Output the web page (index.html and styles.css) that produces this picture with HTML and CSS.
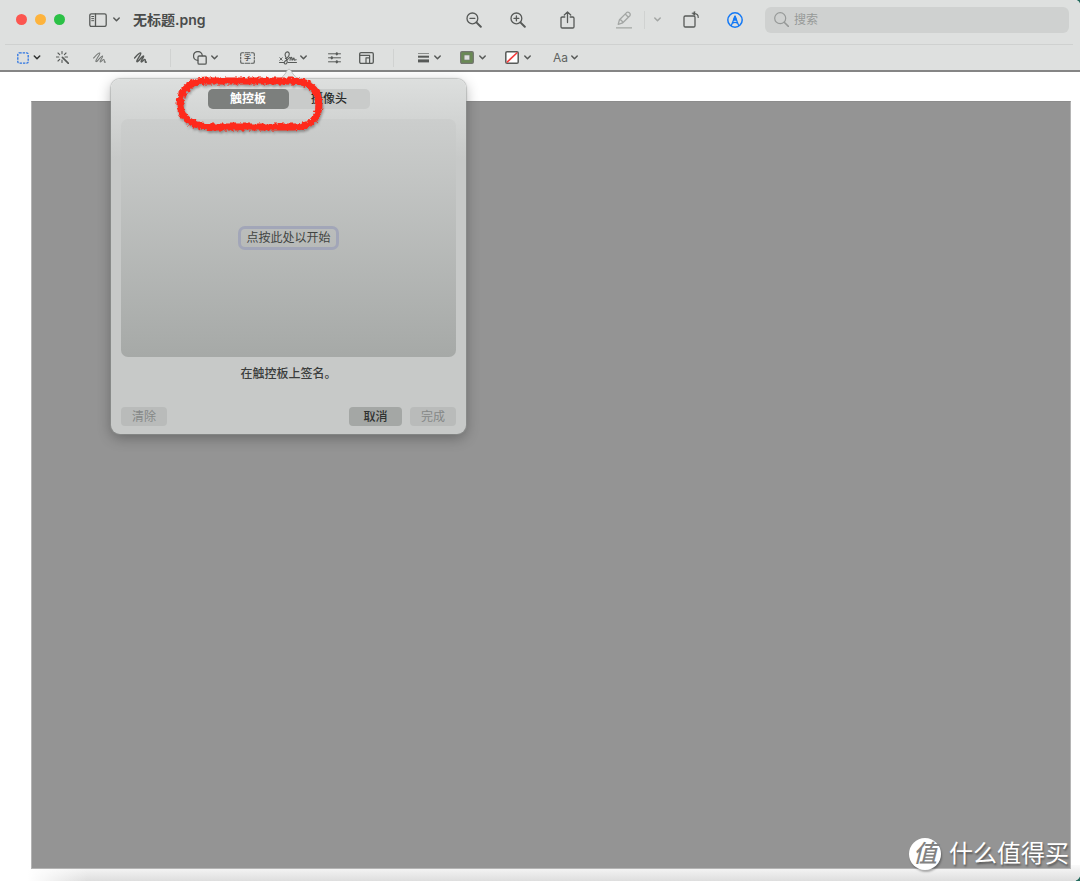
FILE: index.html
```html
<!DOCTYPE html>
<html lang="zh-CN">
<head>
<meta charset="utf-8">
<title>无标题.png</title>
<link rel="stylesheet" href="styles.css">
</head>
<body>
<div class="window">
  <header class="toolbar">
    <div class="titlebar">
      <div class="lights">
        <button class="light close" aria-label="关闭"></button>
        <button class="light minimize" aria-label="最小化"></button>
        <button class="light expand" aria-label="缩放"></button>
      </div>
      <button class="tool sidebar-tool" aria-label="边栏">
        <svg width="18" height="14" viewBox="0 0 18 14"><rect x=".8" y=".8" width="16.4" height="12.6" rx="1.6"/><path d="M6.5 1v12"/><path d="M2.7 3.5h2M2.7 5.6h2M2.7 7.7h2" stroke-width="1"/></svg>
        <svg class="chev" width="7" height="5" viewBox="0 0 7 5"><path d="M.8 1l2.7 2.7L6.2 1"/></svg>
      </button>
      <h1 class="title">无标题.png</h1>
      <div class="actions">
        <button class="tool" aria-label="缩小"><svg width="16" height="16" viewBox="0 0 16 16"><circle cx="6.4" cy="6.4" r="5.4"/><path d="M4 6.4h4.8"/><path d="M10.4 10.4l4.4 4.4" stroke-width="2"/></svg></button>
        <button class="tool zoom-in" aria-label="放大"><svg width="16" height="16" viewBox="0 0 16 16"><circle cx="6.4" cy="6.4" r="5.4"/><path d="M4 6.4h4.8M6.4 4v4.8"/><path d="M10.4 10.4l4.4 4.4" stroke-width="2"/></svg></button>
        <button class="tool share" aria-label="共享"><svg width="15" height="18" viewBox="0 0 15 18"><path d="M4.8 6H2.3Q1 6 1 7.300V15.700Q1 17 2.300 17h10.400Q14 17 14 15.700V7.300Q14 6 12.700 6h-2.500M7.500 11.500V1M4.300 4L7.500.9l3.200 3.100"/></svg></button>
        <button class="tool faded pencil" aria-label="高亮标记"><svg width="16" height="18" viewBox="0 0 16 18"><path d="M2.200 13.400L3.500 8.700 10.600 1.600Q11.800.6 13.300 1.800T13.900 4.700L6.800 11.800zM3.500 8.700q2.500.3 3.300 3.100M9.200 3l3.200 3.200M.5 16.800h15" stroke-width="1.300"/></svg></button>
        <span class="divider short"></span>
        <button class="tool faded more" aria-label="高亮颜色"><svg class="chev" width="7" height="5" viewBox="0 0 7 5"><path d="M.8 1l2.700 2.700L6.200 1"/></svg></button>
        <button class="tool rotate" aria-label="旋转"><svg width="17" height="18" viewBox="0 0 17 18"><rect x="1" y="5" width="11" height="11" rx="1.300"/><path d="M15.200 6.500Q15.500 2.500 10.500 2.500" stroke-width="1.200"/><path d="M12 .4v4.200L9 2.500z" fill="#575a58" stroke-width=".4"/></svg></button>
        <button class="tool markup" aria-label="标记"><svg width="16" height="16" viewBox="0 0 16 16"><circle cx="8" cy="8" r="7.200" stroke-width="1.500"/><path d="M4.300 13.600L8 4.500l3.700 9.100M5.500 11.200q2.500-1.800 5 0"/><path d="M8 4L6.500 8h3z" fill="#1479f5"/></svg></button>
      </div>
      <label class="search">
        <svg width="15" height="15" viewBox="0 0 15 15"><circle cx="6.200" cy="6.200" r="5.500"/><path d="M10.200 10.200l4.200 4.200" stroke-width="1.500"/></svg>
        <input type="search" placeholder="搜索" aria-label="搜索">
      </label>
    </div>
    <div class="markupbar">
      <button class="tool selection" aria-label="选择"><svg width="12" height="12" viewBox="0 0 12 12"><rect x=".8" y=".8" width="10.400" height="10.400" rx="1.500" stroke-dasharray="2.400 1"/></svg><svg class="chev dark" width="8" height="5" viewBox="0 0 7 5"><path d="M.8 1l2.700 2.700L6.200 1"/></svg></button>
      <button class="tool wand" aria-label="即时阿尔法"><svg width="13" height="13" viewBox="0 0 13 13"><path d="M6 .5v2.300M6 9v2.500M.4 6h2.400M9 6h2.500M2 2l1.700 1.700M10 2L8.400 3.600M2 10l1.700-1.700" stroke-width="1.100"/><path d="M6.400 6.400l6 6" stroke-width="1.600"/></svg></button>
      <button class="tool sketch" aria-label="速绘"><svg width="13" height="12" viewBox="0 0 13 12"><path d="M.6 6C2.500 4 5.500.2 6.700 1S2 8.200 2.900 9.500 8.500 3.200 9.500 4 6.300 9 7.200 9.800 10 6.900 11 7.600 10.500 11 12.400 10.100" stroke-width="1.100"/></svg></button>
      <button class="tool draw" aria-label="绘图"><svg width="13" height="12" viewBox="0 0 13 12"><path d="M.6 6C2.500 4 5.500.2 6.700 1S2 8.200 2.900 9.500 8.500 3.200 9.500 4 6.300 9 7.200 9.800 10 6.900 11 7.600 10.500 11 12.400 10.100" stroke-width="1.500"/></svg></button>
      <span class="divider first"></span>
      <button class="tool shapes" aria-label="形状"><svg width="14" height="14" viewBox="0 0 14 14"><path d="M4.800 9.300A4.400 4.400 0 1 1 9.300 4.700"/><rect x="5" y="5" width="8.200" height="8.200" rx="1.200"/></svg><svg class="chev" width="7" height="5" viewBox="0 0 7 5"><path d="M.8 1l2.700 2.700L6.200 1"/></svg></button>
      <button class="tool textbox" aria-label="文本"><svg width="15" height="12" viewBox="0 0 15 12"><path d="M.7 3.500V2Q.7.700 2 .7h1.500M5 .7h5M11.500.7H13q1.300 0 1.300 1.300v1.500M.7 5v2M14.300 5v2M.7 8.500V10q0 1.300 1.300 1.300h1.500M5 11.300h5M11.500 11.300H13q1.300 0 1.300-1.300V8.500" stroke-width="1.100"/></svg><span class="glyph">字</span></button>
      <button class="tool signature" aria-label="签名"><svg width="18" height="14" viewBox="0 0 18 14"><path d="M.5 11.500h4.500M9 11.500h8.500" stroke-width="1"/><path d="M.8 6.700l2.400 2.600M3.200 6.700L.8 9.300" stroke-width=".9"/><path d="M6.500 7.500C9.500 6.500 11 3.500 9.800 1.600 8.500 0 5.600 1.400 6.200 4.400 6.700 6.800 9 9.500 8 11.800 7 14 4.600 12.800 5.300 11.200 6 9.600 9.500 8.500 10.800 6.300M11 9.200C11 8 12 6 12.700 6.400S12.400 9.200 13.200 9.200 14.200 6.900 14.900 7.100 14.700 9.200 15.500 9.200s1.200-.3 1.700-.5" stroke-width="1.100"/></svg><svg class="chev" width="7" height="5" viewBox="0 0 7 5"><path d="M.8 1l2.700 2.700L6.200 1"/></svg></button>
      <button class="tool adjust" aria-label="调整颜色"><svg width="13" height="12" viewBox="0 0 13 12"><path d="M.5 1.800h12M.5 5.800h12M.5 9.800h12" stroke-width="1"/><path d="M8.800 1.300v1M3.800 5.300v1M8.800 9.300v1" stroke-width="2.200"/></svg></button>
      <button class="tool resize" aria-label="调整大小"><svg width="15" height="12" viewBox="0 0 15 12"><rect x=".7" y=".7" width="13.600" height="10.600" rx="1.300"/><path d="M1 3.300h9.600v7.700M7 11V5.800h3.600" stroke-width="1.200"/></svg></button>
      <span class="divider second"></span>
      <button class="tool line" aria-label="线条样式"><svg width="11" height="11" viewBox="0 0 11 11"><path d="M0 1.500h11" stroke-width="1" stroke="#8b8e8c"/><path d="M0 4.700h11" stroke-width="2"/><path d="M0 8.900h11" stroke-width="3"/></svg><svg class="chev" width="7" height="5" viewBox="0 0 7 5"><path d="M.8 1l2.700 2.700L6.200 1"/></svg></button>
      <button class="tool border" aria-label="边框颜色"><svg width="14" height="13" viewBox="0 0 14 13"><rect x=".7" y=".7" width="12.600" height="11.600" rx="1.300" fill="#698a54" stroke="#737670"/><rect x="4.300" y="4" width="5.400" height="5" fill="#dee0df" stroke="#777a75" stroke-width=".6"/></svg><svg class="chev" width="7" height="5" viewBox="0 0 7 5"><path d="M.8 1l2.700 2.700L6.200 1"/></svg></button>
      <button class="tool fill" aria-label="填充颜色"><svg width="14" height="13" viewBox="0 0 14 13"><rect x=".8" y=".8" width="12.400" height="11.400" rx="1.300" fill="#fff" stroke-width="1.500"/><path d="M2.400 10.800L11.800 2" stroke="#f53d3d" stroke-width="1.700"/></svg><svg class="chev" width="7" height="5" viewBox="0 0 7 5"><path d="M.8 1l2.700 2.700L6.200 1"/></svg></button>
      <button class="tool fontstyle" aria-label="文本样式"><span>Aa</span><svg class="chev" width="7" height="5" viewBox="0 0 7 5"><path d="M.8 1l2.700 2.700L6.200 1"/></svg></button>
    </div>
  </header>
  <main class="stage"><div class="canvas"></div></main>

  <section class="popover" aria-label="签名">
    <svg class="arrow" width="24" height="12" viewBox="0 0 24 12"><path class="arrow-fill" d="M0 12Q5 11 8 6L10.500 2Q12 0 13.500 2L16 6q3 5 8 6z"/><path class="arrow-edge" d="M0 11.500Q5 11 8 6L10.500 2Q12 0 13.500 2L16 6q3 5 8 5.500"/></svg>
    <div class="segments">
      <button class="segment active">触控板</button>
      <button class="segment">摄像头</button>
    </div>
    <div class="pad"><button class="start">点按此处以开始</button></div>
    <p class="caption">在触控板上签名。</p>
    <div class="buttons">
      <button class="push" disabled>清除</button>
      <button class="push cancel">取消</button>
      <button class="push" disabled>完成</button>
    </div>
  </section>

  <svg class="scribble" width="156" height="62" viewBox="0 0 156 62">
    <defs><filter id="rough" x="-10%" y="-10%" width="120%" height="120%"><feTurbulence type="fractalNoise" baseFrequency=".3" numOctaves="3" seed="9"/><feDisplacementMap in="SourceGraphic" scale="5" xChannelSelector="R" yChannelSelector="G"/></filter></defs>
    <path filter="url(#rough)" d="M34 9H120C136 9 147 17 147 32S138 55 122 55H40C21 55 8 46 8 32S19 9 34 9z"/>
  </svg>

  <div class="watermark"><span class="badge">值</span><span>什么值得买</span></div>
</div>
</body>
</html>
```

FILE: styles.css
```css
* { box-sizing: border-box; }
body {
  margin: 0;
  background: #256b5e;
  color: #4a4c4b;
  font-family: Inter, "Noto Sans CJK SC", sans-serif;
}
button { border: 0; padding: 0; margin: 0; background: none; color: inherit; font: inherit; }
svg { display: block; flex: none; }
.window {
  position: relative;
  display: flex;
  flex-direction: column;
  min-height: 100vh;
  overflow: hidden;
  border-radius: 0 5px 7px 0;
  background: #fff;
}
.toolbar { background: #dee0df; border-bottom: 2px solid #858585; }
.titlebar {
  display: flex;
  align-items: center;
  height: 44px;
  padding: 0 11px 5px 16px;
}
.lights { display: flex; gap: 8px; }
.light { width: 11px; height: 11px; border-radius: 50%; }
.close { background: #fc5650; }
.minimize { background: #fdb33c; }
.expand { background: #2bc146; }
.tool { display: flex; align-items: center; gap: 7px; flex: none; }
.tool svg {
  fill: none;
  stroke: #575a58;
  stroke-width: 1.3;
  stroke-linecap: round;
  stroke-linejoin: round;
}
.tool .chev { stroke-width: 1.5; }
.tool .dark { stroke: #303231; }
.sidebar-tool { margin-left: 24px; gap: 6px; }
.title { flex: 1; margin: 0 0 0 13px; font-size: 14px; line-height: 20px; font-weight: 600; }
.actions { display: flex; align-items: center; }
.zoom-in { margin-left: 28px; }
.share { margin-left: 34px; }
.pencil { margin-left: 41px; }
.divider { width: 1px; height: 18px; background: #d0d2d1; }
.short { margin-left: 12px; }
.more { margin-left: 9px; }
.rotate { margin-left: 22px; }
.markup { margin-left: 27px; }
.tool.markup svg { stroke: #1479f5; }
.tool.faded svg { stroke: #a3a6a4; }
.search {
  display: flex;
  align-items: center;
  gap: 5px;
  width: 304px;
  height: 26px;
  margin-left: 22px;
  padding: 0 9px;
  border-radius: 6px;
  background: #cfd1d0;
}
.search svg { fill: none; stroke: #969998; stroke-width: 1.2; stroke-linecap: round; }
.search input {
  flex: 1;
  min-width: 0;
  padding: 0;
  border: 0;
  outline: 0;
  background: none;
  font: 12px/20px Inter, "Noto Sans CJK SC", sans-serif;
}
.search input::placeholder { color: #979a98; }
.markupbar {
  display: flex;
  align-items: center;
  height: 26px;
  margin: 0 7px 0 5px;
  padding-left: 12px;
  border-top: 1px solid #cfd1d0;
}
.selection { gap: 4px; }
.tool.selection svg:first-child { stroke: #2c74e2; stroke-linecap: butt; }
.wand { margin-left: 15px; }
.sketch { margin-left: 24px; }
.tool.sketch svg { stroke: #777a78; }
.draw { margin-left: 28px; }
.first { margin-left: 23px; }
.shapes { margin-left: 22px; gap: 4px; }
.textbox { display: grid; margin-left: 22px; }
.textbox > * { grid-area: 1 / 1; place-self: center; }
.glyph { font-size: 7px; line-height: 12px; font-weight: 500; }
.signature { margin-left: 24px; gap: 3px; }
.adjust { margin-left: 21px; }
.resize { margin-left: 18px; }
.second { margin-left: 19px; }
.line { margin-left: 24px; gap: 5px; }
.tool.line svg:first-child { stroke-linecap: butt; }
.border, .fill { margin-left: 19px; gap: 5px; }
.fontstyle { margin-left: 22px; gap: 3px; font-size: 12px; line-height: 16px; color: #606361; }
.stage {
  display: flex;
  flex: 1;
  padding: 29px 9px 12px 31px;
  background:
    linear-gradient(90deg, #fff, transparent 60px) right bottom / calc(100% - 28px) 16px no-repeat,
    linear-gradient(#fafafa, #dedede) right bottom / calc(100% - 28px) 16px no-repeat,
    #fff;
}
.canvas { flex: 1; background: #949494; border: 1px solid #b4b4b4; border-top-color: #8c8c8c; }
.popover {
  position: absolute;
  left: 111px;
  top: 79px;
  width: 355px;
  padding: 10px 10px 8px;
  border-radius: 9px;
  background: linear-gradient(#dddfde, #c7c9c8 80px);
  box-shadow: 0 0 1px 1px rgba(150, 154, 152, .5), 0 4px 14px rgba(0, 0, 0, .3);
}
.arrow { position: absolute; left: 166px; top: -11px; }
.arrow-fill { fill: #e6e8e7; }
.arrow-edge { fill: none; stroke: #b4b6b5; stroke-width: .8; }
.segments {
  display: flex;
  width: 162px;
  margin: 0 auto;
  border-radius: 5px;
  background: #c9cbca;
}
.segment { flex: 1; height: 20px; border-radius: 5px; font-size: 12px; line-height: 20px; font-weight: 500; color: #292b2a; }
.active { background: #7c7f7d; color: #fff; font-weight: 700; }
.pad {
  display: grid;
  place-items: center;
  height: 238px;
  margin-top: 10px;
  border-radius: 7px;
  background: linear-gradient(#cccecd, #a6a9a7);
}
.start {
  padding: 0 5px;
  border-radius: 4px;
  box-shadow: 0 0 0 3px #a2a6b8;
  font-size: 12px;
  line-height: 18px;
  color: #414442;
}
.caption { margin: 7px 0 0; text-align: center; font-size: 12px; line-height: 20px; font-weight: 500; color: #3b3d3c; }
.buttons { display: flex; gap: 8px; margin-top: 23px; }
.push {
  width: 46px;
  height: 19px;
  border-radius: 4px;
  background: #b9bbba;
  color: #858887;
  font-size: 12px;
  line-height: 19px;
}
.cancel { width: 53px; margin-left: auto; background: #a4a7a5; color: #303231; font-weight: 500; }
.scribble { position: absolute; left: 172px; top: 72px; overflow: visible; pointer-events: none; filter: drop-shadow(1px 2px 1px rgba(0, 0, 0, .3)); }
.scribble path { fill: none; stroke: #fe2a1b; stroke-width: 7; }
.watermark {
  position: absolute;
  right: 11px;
  bottom: 10px;
  display: flex;
  align-items: center;
  gap: 8px;
  color: #fff;
  font-size: 24px;
  line-height: 34px;
  text-shadow: 1px 2px 2px rgba(0, 0, 0, .4);
}
.badge {
  width: 32px;
  height: 32px;
  border-radius: 50%;
  background: #fff;
  color: #828282;
  text-align: center;
  font-weight: 500;
  font-style: oblique;
  line-height: 31px;
  text-shadow: none;
  box-shadow: 1px 2px 2px rgba(0, 0, 0, .3);
}
```
